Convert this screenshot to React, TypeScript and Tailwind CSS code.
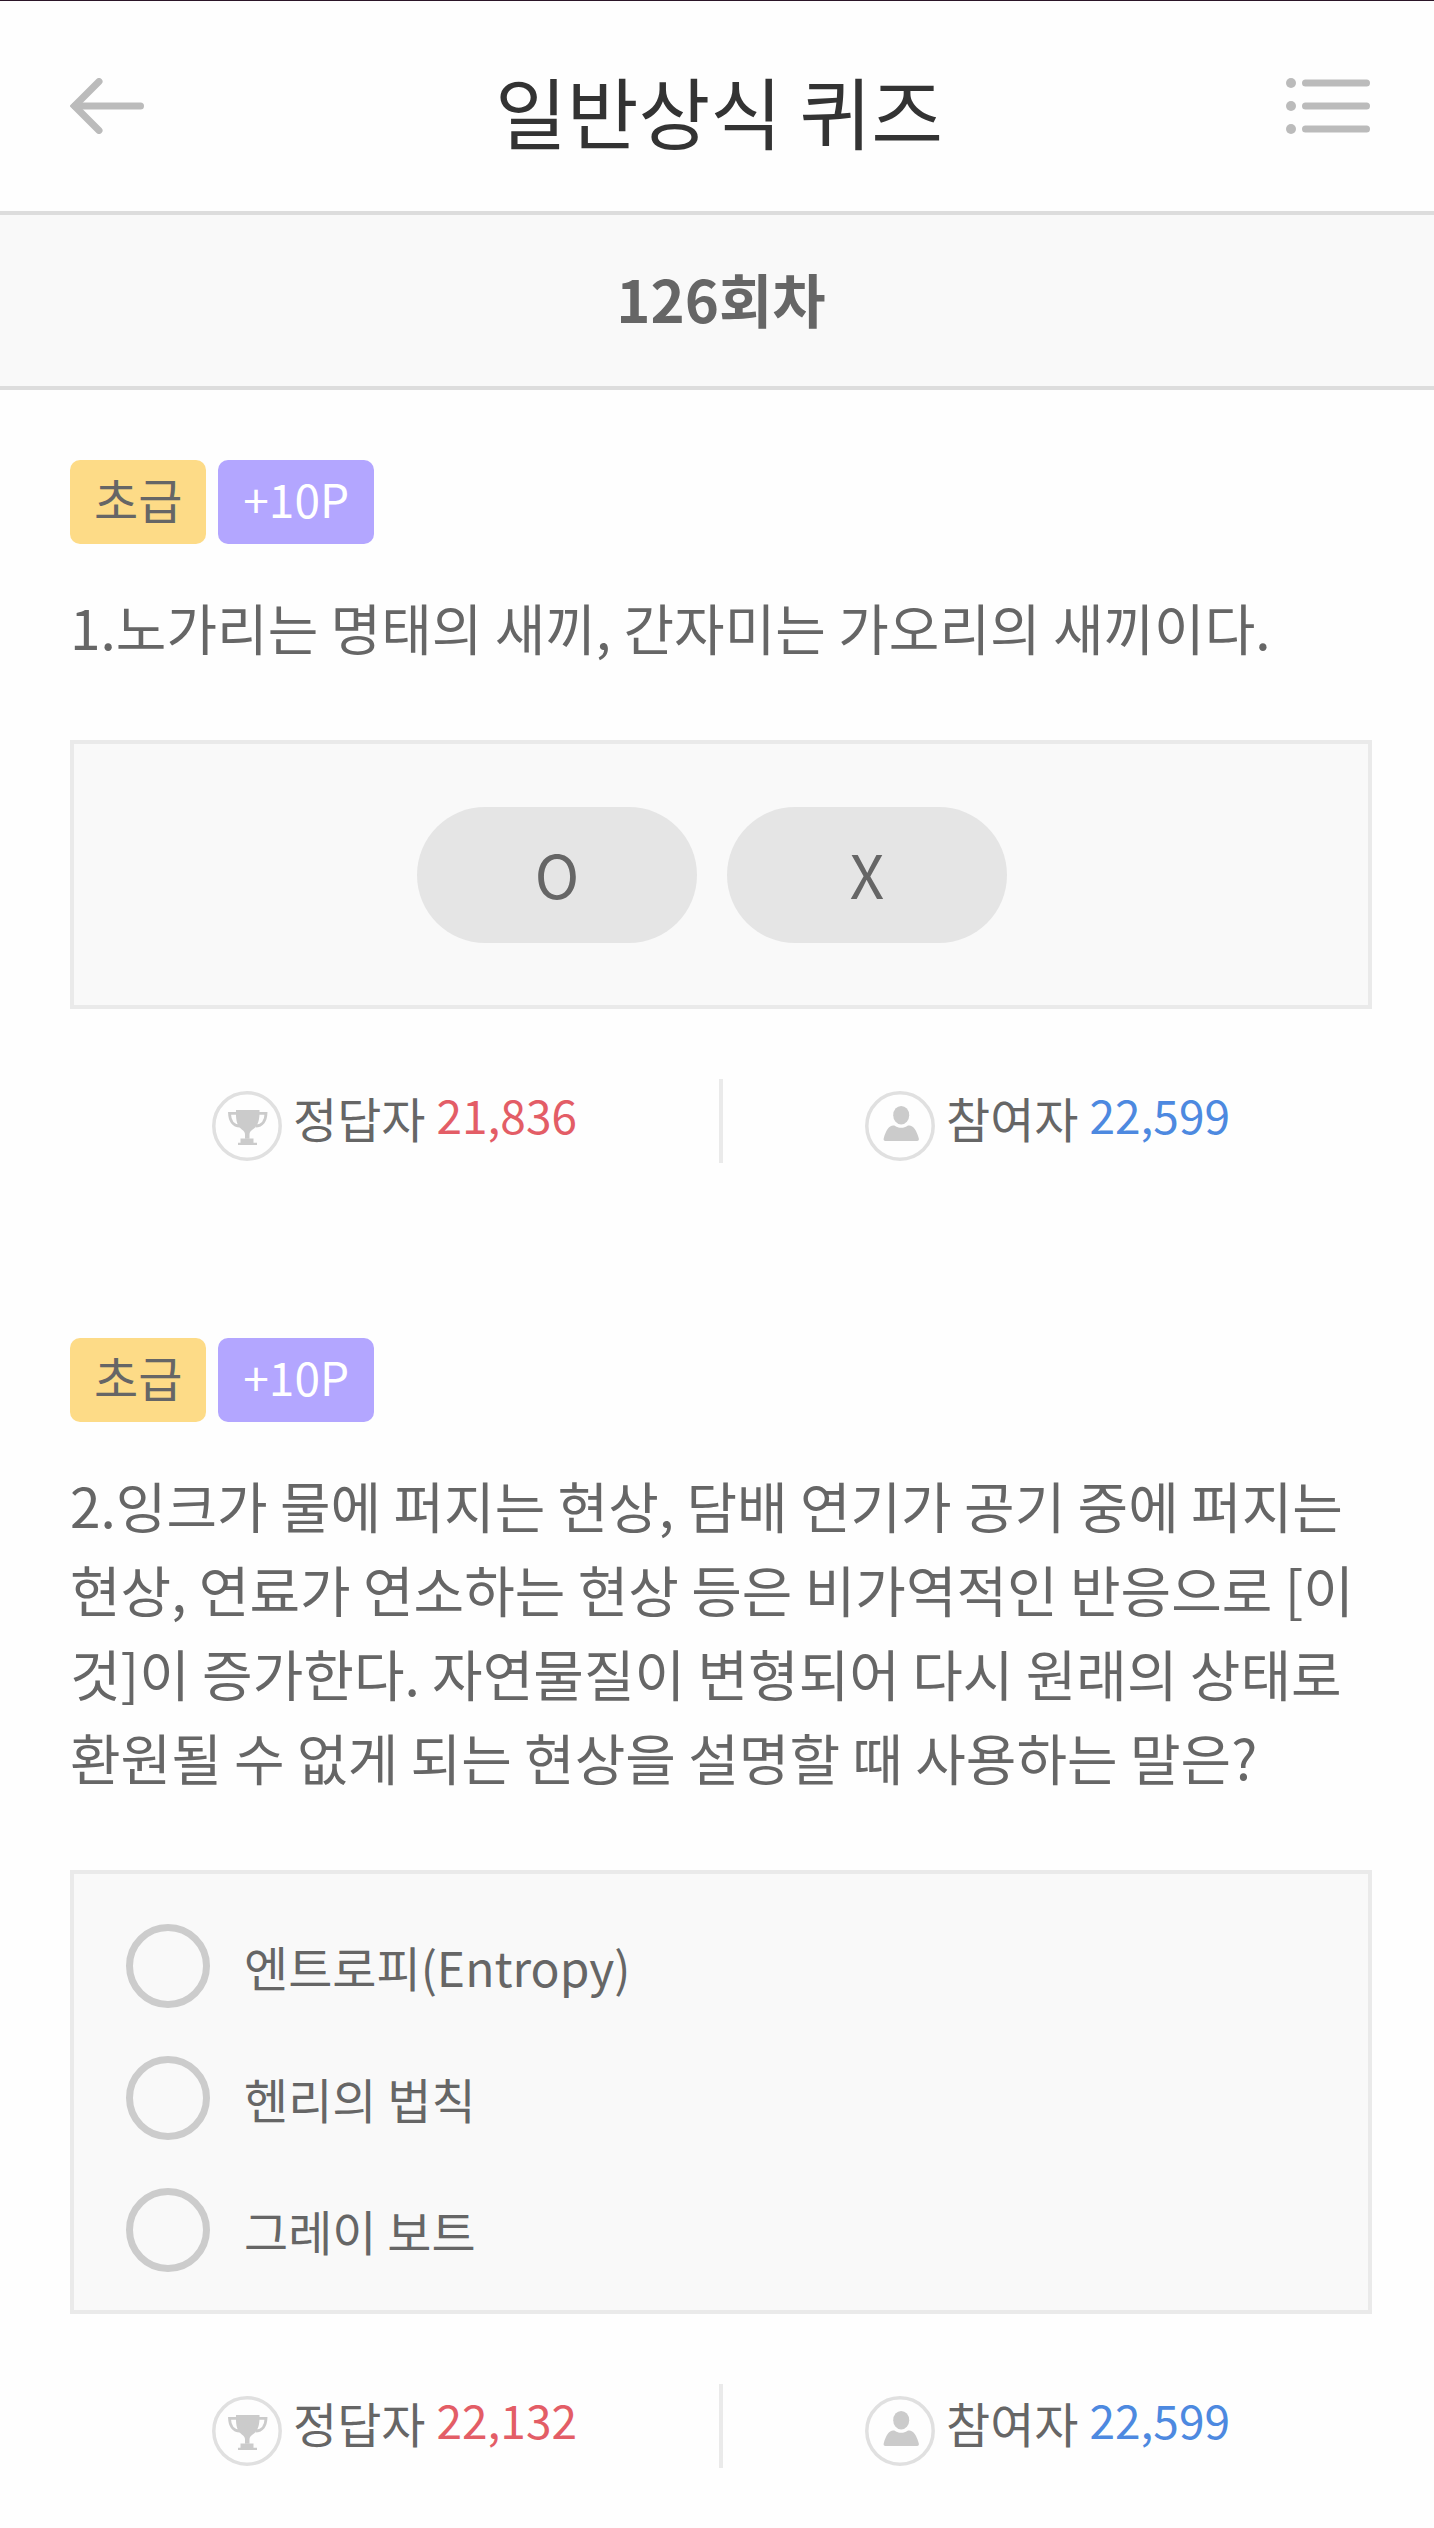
import { useState } from 'react'

interface Question {
  id: number
  level: string
  point: number
  text: string
  type: 'ox' | 'choice'
  options: string[]
  correct: number
  joined: number
}

const questions: Question[] = [
  {
    id: 1,
    level: '초급',
    point: 10,
    text: '노가리는 명태의 새끼, 간자미는 가오리의 새끼이다.',
    type: 'ox',
    options: ['O', 'X'],
    correct: 21836,
    joined: 22599,
  },
  {
    id: 2,
    level: '초급',
    point: 10,
    text: '잉크가 물에 퍼지는 현상, 담배 연기가 공기 중에 퍼지는 현상, 연료가 연소하는 현상 등은 비가역적인 반응으로 [이것]이 증가한다. 자연물질이 변형되어 다시 원래의 상태로 환원될 수 없게 되는 현상을 설명할 때 사용하는 말은?',
    type: 'choice',
    options: ['엔트로피(Entropy)', '헨리의 법칙', '그레이 보트'],
    correct: 22132,
    joined: 22599,
  },
]

function BackIcon() {
  return (
    <svg width="74" height="56" viewBox="0 0 74 56" fill="none" stroke="#bbb" strokeWidth="7" strokeLinecap="round" aria-hidden="true">
      <path d="M29 3.5 4.5 28 29 52.5" />
      <path d="M5 28h65.5" />
    </svg>
  )
}

function MenuIcon() {
  return (
    <svg width="84" height="56" viewBox="0 0 84 56" aria-hidden="true">
      {[5, 28, 51].map((y) => (
        <g key={y} fill="#bbb">
          <circle cx="5" cy={y} r="5" />
          <rect x="16" y={y - 3.5} width="68" height="7" rx="3.5" />
        </g>
      ))}
    </svg>
  )
}

function TrophyIcon() {
  return (
    <svg className="mt-3 flex-none" width="70" height="70" viewBox="0 0 70 70" aria-hidden="true">
      <circle cx="35" cy="35" r="33.2" fill="none" stroke="#e0e0e0" strokeWidth="3.5" />
      <g fill="#cbcbcb">
        <path d="M24 19h23.5c.3 9-1 15.500-6.500 19.200-2.500 1.700-3.500 3-3.500 5.300v4.200h-4.500v-4.200c0-2.300-1-3.600-3.500-5.300C24.500 34.500 23.700 28 24 19Z" />
        <path d="M28.500 47.500h13v4.200h3.500v2.300H26v-2.300h2.500Z" />
      </g>
      <path d="M25 22.300h-7.500c.2 7.200 3.500 12.700 10.500 12.700M46.500 22.300H54c-.2 7.200-3.500 12.700-10.500 12.700" fill="none" stroke="#cbcbcb" strokeWidth="2.800" />
    </svg>
  )
}

function PersonIcon() {
  return (
    <svg className="mt-3 flex-none" width="70" height="70" viewBox="0 0 70 70" aria-hidden="true">
      <circle cx="35" cy="35" r="33.2" fill="none" stroke="#e0e0e0" strokeWidth="3.5" />
      <g fill="#cbcbcb">
        <ellipse cx="36.200" cy="24.200" rx="8" ry="9.300" />
        <path d="M28.300 34.500c2.200 0 3.500 2.300 7.900 2.300s5.700-2.300 7.900-2.300c4.500 0 7.400 5 9.600 12.500.6 2-.1 3-1.700 3H20.500c-1.600 0-2.300-1-1.700-3 2.200-7.500 5-12.500 9.500-12.500Z" />
      </g>
    </svg>
  )
}

function QuestionItem({ question }: { question: Question }) {
  const [answer, setAnswer] = useState<string | null>(null)

  return (
    <section>
      <div className="flex gap-3 leading-[76px]">
        <span className="rounded-[10px] bg-[#fddb87] px-6 pb-2 text-[48px]">{question.level}</span>
        <span className="rounded-[10px] bg-[#b3a6ff] px-[25px] pb-2 text-[46px] text-white">+{question.point}P</span>
      </div>

      <h2 className="mt-10 text-[55px] leading-[84px]">
        {question.id}.{question.text}
      </h2>

      {question.type === 'ox' ? (
        <div className="mt-[72px] flex justify-center gap-[30px] border-4 border-[#eaeaea] bg-[#f9f9f9] pt-[63px] pr-[18px] pb-[62px]">
          {question.options.map((option) => (
            <button
              key={option}
              type="button"
              onClick={() => setAnswer(option)}
              aria-pressed={answer === option}
              className="h-[136px] w-[280px] rounded-full bg-[#e5e5e5] pb-1 text-[60px] leading-none aria-pressed:bg-[#d0d0d0]"
            >
              {option}
            </button>
          ))}
        </div>
      ) : (
        <div className="mt-[72px] flex flex-col gap-12 border-4 border-[#eaeaea] bg-[#f9f9f9] px-[52px] pt-[50px] pb-[38px]">
          {question.options.map((option) => (
            <label key={option} className="flex items-center gap-[34px] text-[48px] leading-[84px]">
              <input
                type="radio"
                name={`question-${question.id}`}
                checked={answer === option}
                onChange={() => setAnswer(option)}
                className="size-21 flex-none appearance-none rounded-full border-[7px] border-[#ccc] checked:border-[24px]"
              />
              {option}
            </label>
          ))}
        </div>
      )}

      {/* Stats */}
      <div className="mt-[70px] flex h-21">
        <div className="flex flex-1 justify-center gap-[11px]">
          <TrophyIcon />
          <span className="text-[48px] leading-[76px]">정답자</span>
          <span className="text-[46px] leading-[70px] text-[#e35d66]">{question.correct.toLocaleString('en-US')}</span>
        </div>
        <div className="w-1 bg-[#eaeaea]" />
        <div className="flex flex-1 justify-center gap-[11px]">
          <PersonIcon />
          <span className="text-[48px] leading-[76px]">참여자</span>
          <span className="text-[46px] leading-[70px] text-[#4d89e0]">{question.joined.toLocaleString('en-US')}</span>
        </div>
      </div>
    </section>
  )
}

export default function App() {
  return (
    <div className="min-h-screen border-t border-[#2b1528] bg-[#fefefe] font-['Noto_Sans_CJK_KR',sans-serif] text-[#666]">
      {/* Header */}
      <header className="flex h-[214px] items-center justify-between border-b-4 border-[#ddd] pr-16 pl-[70px]">
        <button type="button" aria-label="뒤로">
          <BackIcon />
        </button>
        <h1 className="pt-2 pl-2 text-[78px] leading-[112px] text-[#333]">일반상식 퀴즈</h1>
        <button type="button" aria-label="메뉴">
          <MenuIcon />
        </button>
      </header>

      <div className="flex h-[175px] items-center justify-center border-b-4 border-[#ddd] bg-[#f9f9f9] pb-1 pl-2 text-[58px] font-bold">
        126회차
      </div>

      <main className="flex flex-col gap-[175px] pt-[70px] pr-[62px] pb-[60px] pl-[70px]">
        {questions.map((question) => (
          <QuestionItem key={question.id} question={question} />
        ))}
      </main>
    </div>
  )
}
